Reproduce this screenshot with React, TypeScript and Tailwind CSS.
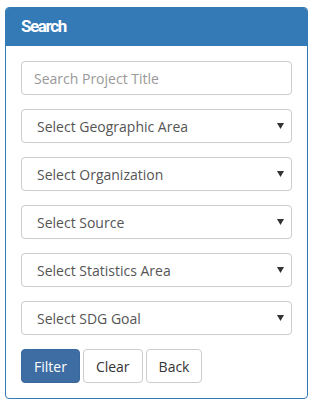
const selects = [
  "Select Geographic Area",
  "Select Organization",
  "Select Source",
  "Select Statistics Area",
  "Select SDG Goal",
];

const Caret = () => (
  <svg width="7" height="6" viewBox="0 0 7 6" className="shrink-0">
    <path d="M0 0 L7 0 L3.5 6 Z" fill="#333" />
  </svg>
);

export default function App() {
  return (
    <div className="min-h-screen bg-white pl-[5px] pt-[7px]" style={{ fontFamily: "'Open Sans', sans-serif" }}>
      <div className="w-[303px] overflow-hidden rounded-[4px] border border-[#337ab7] bg-white">
        <div className="flex h-[38px] items-center bg-[#337ab7] px-[15px] pb-[1px]">
          <h3
            className="text-[17px] font-bold tracking-[-1.4px] text-white"
            style={{ fontFamily: "Roboto, sans-serif" }}
          >
            Search
          </h3>
        </div>
        <div className="flex flex-col gap-[14px] p-[15px]">
          <input
            type="text"
            placeholder="Search Project Title"
            className="h-[34px] w-full rounded-[4px] border border-[#ccc] px-[12px] text-[14px] text-[#555] outline-none placeholder:text-[#999]"
          />
          {selects.map((label) => (
            <div
              key={label}
              className="flex h-[34px] items-center justify-between rounded-[4px] border border-[#ccc] pl-[15px] pr-[7px] text-[14px] text-[#555]"
            >
              <span>{label}</span>
              <Caret />
            </div>
          ))}
          <div className="flex gap-[3px]">
            <button className="h-[34px] rounded-[4px] border border-[#3a679c] bg-[#3e6da3] px-[12px] text-[14px] text-white">
              Filter
            </button>
            <button className="h-[34px] rounded-[4px] border border-[#ccc] bg-white px-[12px] text-[14px] text-[#333]">
              Clear
            </button>
            <button className="h-[34px] rounded-[4px] border border-[#ccc] bg-white px-[12px] text-[14px] text-[#333]">
              Back
            </button>
          </div>
        </div>
      </div>
    </div>
  );
}
